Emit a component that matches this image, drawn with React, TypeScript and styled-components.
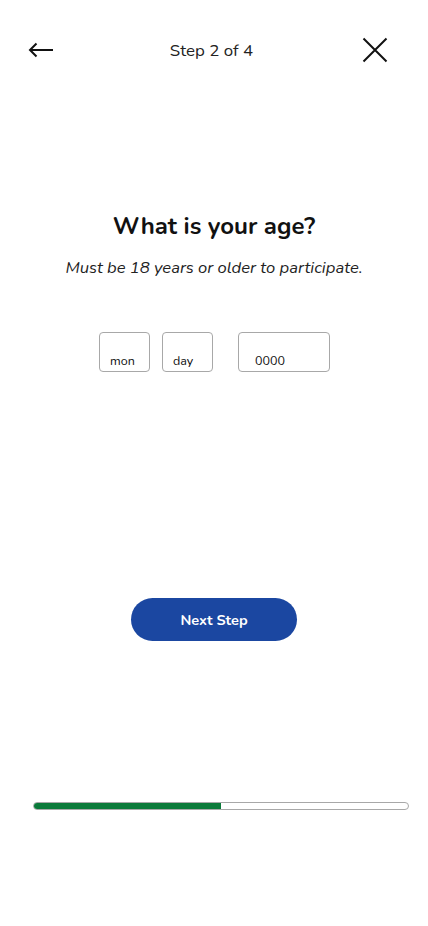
import styled, { createGlobalStyle } from "styled-components";

const GlobalStyle = createGlobalStyle`
	body {
		margin: 0;
		background: #ffffff;
		font-family: "Nunito", Lato, "Noto Sans", sans-serif;
		color: #111111;
	}
`;

const Screen = styled.div`
	width: 428px;
	height: 926px;
	display: flex;
	flex-direction: column;
	align-items: center;
	background: #ffffff;
`;

const TopBar = styled.header`
	width: 100%;
	box-sizing: border-box;
	height: 100px;
	padding: 0 38px 0 26px;
	display: grid;
	grid-template-columns: 1fr auto 1fr;
	align-items: center;
`;

const IconButton = styled.button<{ end?: boolean }>`
	border: none;
	background: none;
	padding: 0;
	width: 30px;
	height: 30px;
	display: flex;
	align-items: center;
	justify-content: center;
	justify-self: ${(p) => (p.end ? "end" : "start")};
	cursor: pointer;
`;

const StepLabel = styled.div`
	font-size: 16.9px;
	color: #222222;
	margin-left: 7px;
	margin-top: 1px;
`;

const Title = styled.h1`
	margin: 112px 0 0;
	font-size: 24px;
	font-weight: 700;
	color: #111111;
	line-height: 28px;
`;

const Subtitle = styled.p`
	margin: 18px 0 0;
	font-size: 16.6px;
	font-style: italic;
	color: #222222;
	line-height: 20px;
`;

const DateRow = styled.div`
	margin-top: 54px;
	display: flex;
	align-items: center;
	margin-left: 1px;
`;

const DateBox = styled.div<{ wide?: boolean; gapLeft: number }>`
	box-sizing: border-box;
	width: ${(p) => (p.wide ? "92px" : "51px")};
	height: 40px;
	margin-left: ${(p) => p.gapLeft}px;
	border: 1px solid #a8a8a8;
	border-radius: 4px;
	display: flex;
	align-items: flex-end;
	padding: 0 0 2px ${(p) => (p.wide ? "16px" : "10px")};
	font-size: 12.5px;
	color: #111111;
`;

const NextButton = styled.button`
	margin-top: 226px;
	width: 166px;
	height: 43px;
	border: none;
	border-radius: 22px;
	background: #1b47a1;
	color: #ffffff;
	font-family: inherit;
	font-size: 14.5px;
	font-weight: 700;
	cursor: pointer;
`;

const Progress = styled.div`
	margin-top: 161px;
	width: 376px;
	height: 8px;
	box-sizing: border-box;
	border: 1px solid #a8a8a8;
	border-radius: 4px;
	overflow: hidden;
	margin-left: 14px;
`;

const ProgressFill = styled.div`
	height: 100%;
	background: #0b7a3a;
`;

function App() {
	const step = 2;
	const total = 4;
	return (
		<Screen>
			<GlobalStyle />
			<TopBar>
				<IconButton aria-label="Back">
					<svg width="26" height="16" viewBox="0 0 26 16" fill="none">
						<path d="M25 8H2M8.5 1.5L2 8l6.5 6.5" stroke="#111" strokeWidth="2" />
					</svg>
				</IconButton>
				<StepLabel>
					Step {step} of {total}
				</StepLabel>
				<IconButton aria-label="Close" end>
					<svg width="26" height="26" viewBox="0 0 26 26" fill="none">
						<path d="M1.5 1.5l23 23M24.5 1.5l-23 23" stroke="#111" strokeWidth="2" />
					</svg>
				</IconButton>
			</TopBar>
			<Title>What is your age?</Title>
			<Subtitle>Must be 18 years or older to participate.</Subtitle>
			<DateRow>
				<DateBox gapLeft={0}>mon</DateBox>
				<DateBox gapLeft={12}>day</DateBox>
				<DateBox gapLeft={25} wide>
					0000
				</DateBox>
			</DateRow>
			<NextButton>Next Step</NextButton>
			<Progress>
				<ProgressFill style={{ width: `${(step / total) * 100}%` }} />
			</Progress>
		</Screen>
	);
}

export default App;
